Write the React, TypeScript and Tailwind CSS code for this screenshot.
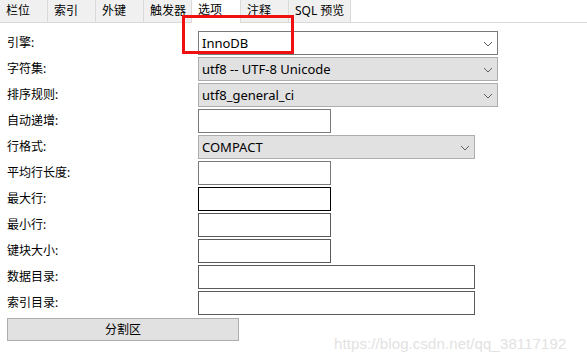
const tabs = ['栏位', '索引', '外键', '触发器', '选项', '注释', 'SQL 预览'];

type Field = {
  label: string;
  kind: 'select' | 'input';
  value?: string;
  width: string;
  active?: boolean;
  border?: string;
};

const fields: Field[] = [
  { label: '引擎:', kind: 'select', value: 'InnoDB', width: 'w-[300px]', active: true },
  { label: '字符集:', kind: 'select', value: 'utf8 -- UTF-8 Unicode', width: 'w-[300px]' },
  { label: '排序规则:', kind: 'select', value: 'utf8_general_ci', width: 'w-[300px]' },
  { label: '自动递增:', kind: 'input', width: 'w-[133px]', border: 'border-[#7a7a7a]' },
  { label: '行格式:', kind: 'select', value: 'COMPACT', width: 'w-[277px]' },
  { label: '平均行长度:', kind: 'input', width: 'w-[133px]', border: 'border-[#7a7a7a]' },
  { label: '最大行:', kind: 'input', width: 'w-[133px]', border: 'border-black' },
  { label: '最小行:', kind: 'input', width: 'w-[133px]', border: 'border-[#5a5a5a]' },
  { label: '键块大小:', kind: 'input', width: 'w-[133px]', border: 'border-[#5a5a5a]' },
  { label: '数据目录:', kind: 'input', width: 'w-[277px]', border: 'border-[#5a5a5a]' },
  { label: '索引目录:', kind: 'input', width: 'w-[277px]', border: 'border-[#5a5a5a]' },
];

const Chevron = () => (
  <svg width="10" height="6" viewBox="0 0 10 6" className="absolute right-[4px] top-[9px]">
    <path d="M1 1 L5 5 L9 1" fill="none" stroke="#5f5f5f" strokeWidth="1" />
  </svg>
);

const App = () => {
  return (
    <div className="relative w-[587px] h-[360px] bg-white overflow-hidden text-[12px] text-black font-['Noto_Sans','Noto_Sans_CJK_SC',sans-serif]">
      <div className="flex h-[23px] border-b border-[#dadada]">
        {tabs.map((t) => (
          <div
            key={t}
            className={
              t === '选项'
                ? 'h-[23px] w-[49px] bg-white pl-[6px] leading-[20px] border-r border-[#dadada]'
                : t === 'SQL 预览'
                ? 'h-[22px] w-[62px] bg-[#f0f0f0] pl-[6px] leading-[22px] border-r border-[#dadada]'
                : 'h-[22px] w-[48px] bg-[#f0f0f0] pl-[6px] leading-[22px] border-r border-[#dadada]'
            }
          >
            {t}
          </div>
        ))}
      </div>

      <div className="flex flex-col gap-[2px] pt-[8px] pl-[7px]">
        {fields.map((f) => (
          <div key={f.label} className="flex h-[24px] items-center">
            <div className="w-[191px] leading-[24px]">{f.label}</div>
            {f.kind === 'select' ? (
              <div
                className={`relative h-[24px] ${f.width} border pl-[3px] leading-[22px] text-[13px] ${
                  f.active ? 'bg-white border-[#7a7a7a]' : 'bg-[#e1e1e1] border-[#adadad]'
                }`}
              >
                {f.value}
                <Chevron />
              </div>
            ) : (
              <div className={`h-[24px] ${f.width} border bg-white ${f.border}`} />
            )}
          </div>
        ))}
        <div className="mt-[1px] h-[23px] w-[232px] border border-[#adadad] bg-[#e1e1e1] text-center leading-[21px]">
          分割区
        </div>
      </div>

      <div className="absolute left-[182px] top-[15px] w-[112px] h-[39px] border-[3px] border-[#f01010]" />

      <div className="absolute left-[334px] top-[333px] text-[15px] text-[#e2e2e2] font-['Liberation_Sans',sans-serif] tracking-[0.1px]">
        https://blog.csdn.net/qq_38117192
      </div>
    </div>
  );
};

export default App;
